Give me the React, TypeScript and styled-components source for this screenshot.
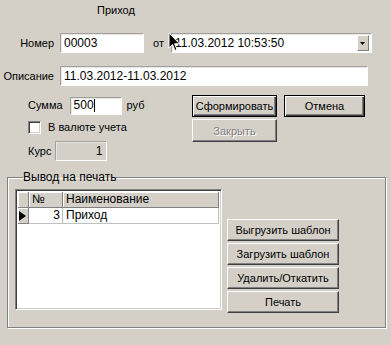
import React from "react";
import styled, { createGlobalStyle, css } from "styled-components";

const Global = createGlobalStyle`
  html, body { margin: 0; padding: 0; background: #d4d0c8; }
  body { font-family: "Liberation Sans", Arial, sans-serif; font-size: 11px; color: #000; }
  * { box-sizing: border-box; }
`;

const Page = styled.div`
  position: relative;
  width: 391px;
  height: 345px;
  background: #d4d0c8;
  line-height: 13px;
  overflow: hidden;
`;

const Title = styled.div`
  padding: 4px 0 0 97px;
  height: 17px;
`;

const Row = styled.div<{ $top: number; $h: number }>`
  display: flex;
  align-items: center;
  margin-top: ${(p) => p.$top}px;
  height: ${(p) => p.$h}px;
`;

const Label = styled.div<{ $w: number }>`
  width: ${(p) => p.$w}px;
  text-align: right;
  padding-right: 0;
  flex: none;
`;

const Text = styled.span<{ $ml: number }>`
  margin-left: ${(p) => p.$ml}px;
  flex: none;
`;

const sunken = css`
  border: 1px solid;
  border-color: #a0a0a0 #ffffff #ffffff #a0a0a0;
  box-shadow: inset 1px 1px 0 #e8e6e0;
`;

const Field = styled.div<{ $w: number; $h: number; $ml: number; $gray?: boolean; $right?: boolean }>`
  ${sunken};
  flex: none;
  width: ${(p) => p.$w}px;
  height: ${(p) => p.$h}px;
  margin-left: ${(p) => p.$ml}px;
  background: ${(p) => (p.$gray ? "#d4d0c8" : "#fff")};
  display: flex;
  align-items: center;
  justify-content: ${(p) => (p.$right ? "flex-end" : "flex-start")};
  padding: 0 ${(p) => (p.$right ? 4 : 3)}px 0 3px;
  white-space: nowrap;
  overflow: hidden;
  font-size: 12px;
`;

const Caret = styled.span`
  display: inline-block;
  width: 1px;
  height: 13px;
  background: #000;
`;

const DropButton = styled.div`
  margin-left: auto;
  width: 12px;
  height: 16px;
  background: #d4d0c8;
  border: 1px solid;
  border-color: #fff #808080 #808080 #fff;
  display: flex;
  align-items: center;
  justify-content: center;
  margin-right: -1px;
`;

const Lower = styled.div`
  display: flex;
  margin-top: 9px;
  height: 65px;
`;

const LeftCol = styled.div`
  width: 192px;
  padding-left: 28px;
  flex: none;
`;

const ButtonGrid = styled.div`
  display: grid;
  grid-template-columns: 85px 81px;
  column-gap: 7px;
  row-gap: 2px;
  grid-auto-rows: 22px;
`;

const Button = styled.button<{ $default?: boolean; $h?: number }>`
  font-family: inherit;
  font-size: 11px;
  color: #000;
  background: #d4d0c8;
  padding: 0;
  height: ${(p) => p.$h ?? 22}px;
  border: 1px solid;
  border-color: #fff #404040 #404040 #fff;
  box-shadow: inset -1px -1px 0 #808080;
  ${(p) =>
    p.$default &&
    css`
      border: 1px solid #000;
      box-shadow: inset 1px 1px 0 #fff, inset -1px -1px 0 #404040, inset -2px -2px 0 #808080;
    `}
  &:disabled {
    color: #808080;
    text-shadow: 1px 1px 0 #fff;
  }
`;

const CheckBox = styled.div`
  width: 13px;
  height: 13px;
  background: #fff;
  border: 1px solid;
  border-color: #808080 #fff #fff #808080;
  box-shadow: inset 1px 1px 0 #404040, inset -1px -1px 0 #d4d0c8;
  flex: none;
`;

const Group = styled.fieldset`
  margin: 11px 0 0 7px;
  width: 379px;
  height: 157px;
  padding: 5px 0 0 7px;
  border: 1px solid #808080;
  box-shadow: inset 1px 1px 0 #fff, 1px 1px 0 #fff;
  display: flex;
  align-items: flex-start;
  min-width: 0;
`;

const Legend = styled.legend`
  padding: 0;
  margin-left: 8px;
  line-height: 13px;
  font-size: 12px;
`;

const GroupBody = styled.div`
  display: flex;
  align-items: flex-start;
`;

const Grid = styled.div`
  width: 207px;
  height: 121px;
  background: #fff;
  border: 1px solid;
  border-color: #808080 #fff #fff #808080;
  box-shadow: inset 1px 1px 0 #404040, inset -1px -1px 0 #d4d0c8;
  padding: 2px 2px 0 2px;
  flex: none;
`;

const GridRow = styled.div`
  display: grid;
  grid-template-columns: 11px 34px 1fr;
  height: 16px;
`;

const HeadCell = styled.div<{ $pad?: number }>`
  background: #d4d0c8;
  border-right: 1px solid #808080;
  border-bottom: 1px solid #808080;
  box-shadow: inset 1px 1px 0 #fff;
  padding-left: ${(p) => p.$pad ?? 3}px;
  display: flex;
  align-items: center;
  font-size: 12px;
`;

const Cell = styled.div<{ $right?: boolean }>`
  border-right: 1px solid #c0c0c0;
  border-bottom: 1px solid #c0c0c0;
  display: flex;
  align-items: center;
  justify-content: ${(p) => (p.$right ? "flex-end" : "flex-start")};
  padding: 0 2px 0 3px;
  font-size: 12px;
`;

const SideButtons = styled.div`
  margin: 30px 0 0 5px;
  display: flex;
  flex-direction: column;
  gap: 2px;
  width: 112px;
`;

const Cursor = styled.svg`
  position: absolute;
  left: 168px;
  top: 32px;
`;

export default function App() {
  return (
    <Page>
      <Global />
      <Title>Приход</Title>
      <Row $top={16} $h={20}>
        <Label $w={54}>Номер</Label>
        <Field $w={84} $h={20} $ml={6}>00003</Field>
        <Text $ml={9}>от</Text>
        <Field $w={201} $h={20} $ml={7}>
          11.03.2012 10:53:50
          <DropButton>
            <svg width="5" height="3" viewBox="0 0 5 3">
              <path d="M0 0H5L2.5 3Z" fill="#000" />
            </svg>
          </DropButton>
        </Field>
      </Row>
      <Row $top={13} $h={20}>
        <Label $w={54}>Описание</Label>
        <Field $w={308} $h={20} $ml={6}>11.03.2012-11.03.2012</Field>
      </Row>
      <Lower>
        <LeftCol>
          <Row $top={2} $h={17}>
            <span>Сумма</span>
            <Field $w={52} $h={18} $ml={7}>
              500<Caret />
            </Field>
            <Text $ml={5}>руб</Text>
          </Row>
          <Row $top={7} $h={13}>
            <CheckBox />
            <Text $ml={7}>В валюте учета</Text>
          </Row>
          <Row $top={7} $h={20}>
            <span>Курс</span>
            <Field $w={52} $h={20} $ml={4} $gray $right>1</Field>
          </Row>
        </LeftCol>
        <ButtonGrid>
          <Button $default>Сформировать</Button>
          <Button $default>Отмена</Button>
          <Button disabled $h={23}>Закрыть</Button>
        </ButtonGrid>
      </Lower>
      <Group>
        <Legend>Вывод на печать</Legend>
        <GroupBody>
          <Grid>
            <GridRow>
              <HeadCell />
              <HeadCell>№</HeadCell>
              <HeadCell>Наименование</HeadCell>
            </GridRow>
            <GridRow>
              <HeadCell $pad={1}>
                <svg width="7" height="10" viewBox="0 0 7 10">
                  <path d="M0 0L7 5L0 10Z" fill="#000" />
                </svg>
              </HeadCell>
              <Cell $right>3</Cell>
              <Cell>Приход</Cell>
            </GridRow>
          </Grid>
          <SideButtons>
            <Button>Выгрузить шаблон</Button>
            <Button>Загрузить шаблон</Button>
            <Button>Удалить/Откатить</Button>
            <Button>Печать</Button>
          </SideButtons>
        </GroupBody>
      </Group>
      <Cursor width="13" height="20" viewBox="0 0 13 20">
        <path d="M1 1V16L4.5 12.5L7 18.5L9 17.6L6.6 11.8H11.5Z" fill="#000" stroke="#fff" strokeWidth="1" />
      </Cursor>
    </Page>
  );
}
